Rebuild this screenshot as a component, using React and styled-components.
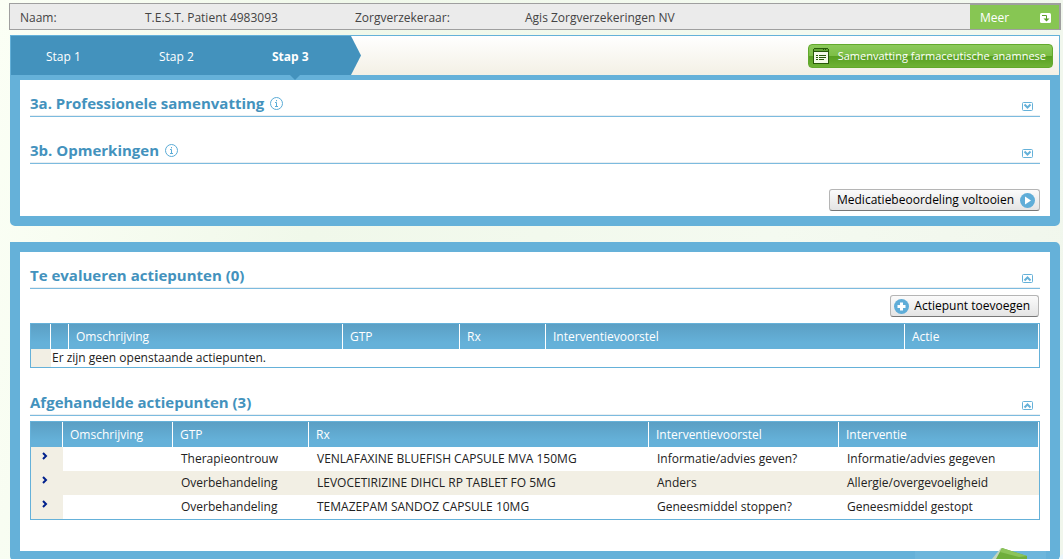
import styled, { createGlobalStyle, css } from "styled-components";

const Colors = {
  Blue: "#65b1d9",
  DarkBlue: "#4392bd",
  Line: "#7cbbdf",
  Beige: "#f2efe4",
  Green: "#87c653",
  Text: "#222222",
};

const GlobalStyle = createGlobalStyle`
  * {
    box-sizing: border-box;
  }

  body {
    margin: 0;
    min-height: 100vh;
    overflow: hidden;
    background: linear-gradient(100deg, #fbfff5 0%, #f0f8ea 30%, #f4faf0 70%, #f0f6ec 100%);
    color: ${Colors.Text};
    font-family: "Open Sans", "Noto Sans", sans-serif;
    font-size: 12px;
    line-height: 16px;
  }

  button {
    font: inherit;
    cursor: pointer;
  }
`;

const Page = styled.main`
  padding: 3px 3px 0 10px;
`;

const PatientBar = styled.header`
  display: flex;
  height: 27px;
  margin: 0 -1px 5px;
  border: 1px solid #9f9f9f;
  background: #ebebeb;
  color: #444444;
`;

const PatientInfo = styled.dl`
  display: flex;
  flex: 1;
  align-items: center;
  margin: 0;
  padding: 2px 0 0 10px;
`;

const InfoLabel = styled.dt`
  width: ${({ $width }) => $width}px;
`;

const InfoValue = styled.dd`
  width: 210px;
  margin: 0;
  white-space: nowrap;
`;

const MoreButton = styled.button`
  display: flex;
  align-items: center;
  justify-content: space-between;
  width: 90px;
  padding: 1px 8px 0 10px;
  border: 0 solid #9f9f9f;
  border-width: 1px 1px 0 0;
  background: ${Colors.Green};
  color: #ffffff;
`;

const StepBar = styled.nav`
  display: flex;
  align-items: center;
  justify-content: space-between;
  height: 40px;
  padding-right: 6px;
  border: 1px solid ${Colors.Blue};
  border-bottom: 0;
  background: linear-gradient(#ffffff, #f3f0e5);
`;

const Steps = styled.ol`
  display: flex;
  align-items: center;
  width: 350px;
  height: 100%;
  margin: 0;
  padding: 2px 10px 0 0;
  list-style: none;
  background: ${Colors.DarkBlue};
  clip-path: polygon(0 0, 340px 0, 100% 50%, 340px 100%, 0 100%);
`;

const Step = styled.li`
  width: 113px;
  padding-left: 35px;
`;

const StepLink = styled.a`
  color: #ffffff;
  font-weight: ${({ $active }) => ($active ? 700 : 400)};
  text-decoration: none;
`;

const SummaryButton = styled.button`
  display: flex;
  align-items: center;
  gap: 9px;
  height: 24px;
  padding: 0 6px 0 4px;
  border: 1px solid #62a92c;
  border-radius: 4px;
  background: linear-gradient(#8cc95a 0%, #7dbf47 48%, #58a022 52%, #6eb236 100%);
  color: #ffffff;
  font-size: 11px;
  white-space: nowrap;
`;

const Panel = styled.section`
  padding: 0 10px;
  border: 10px solid ${Colors.Blue};
  border-radius: 5px;
  background: #ffffff;
`;

const StepPanel = styled(Panel)`
  padding-bottom: 5px;
  margin-bottom: 16px;
  border-top-width: 5px;
  border-radius: 0 0 5px 5px;
`;

const ActionsPanel = styled(Panel)`
  padding-bottom: 31px;
  border-radius: 0 5px 5px 5px;
`;

const StepPointer = styled.span`
  position: absolute;
  top: 75px;
  left: 290px;
  border: 5px solid transparent;
  border-top-color: ${Colors.DarkBlue};
  border-bottom: 0;
`;

const SectionHead = styled.div`
  display: flex;
  align-items: flex-end;
  justify-content: space-between;
  height: ${({ $height }) => $height}px;
  padding: 0 7px 5px 0;
  border-bottom: 1px solid ${Colors.Line};
  box-shadow: inset 0 -1px #e9eef1;
`;

const Title = styled.h2`
  display: flex;
  align-items: center;
  gap: 6px;
  margin: 0;
  color: ${Colors.DarkBlue};
  font-size: 15px;
  font-weight: 700;
  line-height: 16px;
`;

const IconButton = styled.button`
  display: flex;
  padding: 0;
  border: 0;
  background: none;
`;

const Toolbar = styled.div`
  display: flex;
  justify-content: flex-end;
  padding: ${({ $space }) => $space};
`;

const PlainButton = styled.button`
  display: flex;
  align-items: center;
  gap: ${({ $iconFirst }) => ($iconFirst ? 5 : 6)}px;
  height: 22px;
  padding: ${({ $iconFirst }) => ($iconFirst ? "0 8px 0 3px" : "0 4px 0 7px")};
  border: 1px solid #b5b5b5;
  border-bottom-color: #777777;
  border-radius: 3px;
  background: linear-gradient(#fbfbfb, #e4e4e4);
  color: #000000;
  white-space: nowrap;
`;

const Table = styled.table`
  width: 100%;
  margin-bottom: ${({ $gap }) => $gap || 0}px;
  border: 1px solid ${Colors.Blue};
  border-collapse: separate;
  border-spacing: 0;
  table-layout: fixed;
`;

const HeadCell = styled.th`
  height: 25px;
  padding: 0 0 0 7px;
  border-right: 1px solid #ffffff;
  background: linear-gradient(#5b9fc4, #65b1d9 75%);
  color: #ffffff;
  font-weight: 400;
  text-align: left;
`;

const Cell = styled.td`
  height: 24px;
  padding: 0 0 0 8px;
  white-space: nowrap;
`;

const EmptyCell = styled.td`
  height: 18px;
  padding: 0 0 0 1px;
`;

const MarkerCell = styled.td`
  padding: 0 0 7px 11px;
  background: ${Colors.Beige};
`;

const Row = styled.tr`
  ${({ $striped }) =>
    $striped &&
    css`
      background: ${Colors.Beige};
    `}
`;

const Badge = styled.svg`
  position: fixed;
  right: 0;
  bottom: 0;
`;

const openHeads = ["", "", "Omschrijving", "GTP", "Rx", "Interventievoorstel", "Actie"];
const openWidths = [20, 18, 274, 117, 86, null, 134];

const doneHeads = ["", "Omschrijving", "GTP", "Rx", "Interventievoorstel", "Interventie"];
const doneWidths = [32, 110, 136, null, 190, 200];

const doneRows = [
  ["", "Therapieontrouw", "VENLAFAXINE BLUEFISH CAPSULE MVA 150MG", "Informatie/advies geven?", "Informatie/advies gegeven"],
  ["", "Overbehandeling", "LEVOCETIRIZINE DIHCL RP TABLET FO 5MG", "Anders", "Allergie/overgevoeligheid"],
  ["", "Overbehandeling", "TEMAZEPAM SANDOZ CAPSULE 10MG", "Geneesmiddel stoppen?", "Geneesmiddel gestopt"],
];

function InfoIcon() {
  return (
    <svg width="13" height="13" viewBox="0 0 13 13" fill="none" stroke="#5aabd6">
      <circle cx="6.5" cy="6.5" r="6" />
      <path d="M6.5 3v1.3M5 5.5h1.5v4M5 9.5h3" />
    </svg>
  );
}

function ToggleIcon({ open }) {
  return (
    <svg width="11" height="9" viewBox="0 0 11 9" fill="none" stroke="#65b1d9">
      <rect x=".5" y=".5" width="10" height="8" rx="1" />
      <path d={open ? "M2.5 6.5l3-3 3 3" : "M2.5 2.5l3 3 3-3"} strokeWidth="2" />
    </svg>
  );
}

function MoreIcon() {
  return (
    <svg width="11" height="10" viewBox="0 0 11 10">
      <rect width="11" height="10" rx="1.5" fill="#ffffff" />
      <path d="M2 2.5h4.5V6" fill="none" stroke="#5a9e28" />
      <path d="M3.5 5.5h6l-3 3z" fill="#5a9e28" />
    </svg>
  );
}

function WindowIcon() {
  return (
    <svg width="16" height="16" viewBox="0 0 16 16" shapeRendering="crispEdges">
      <path d="M1 0h14v1h1v15H0V1h1z" fill="#285a08" />
      <path d="M1 1h14v2H1z" fill="#64a637" />
      <path d="M10 1h1v1h-1zM12 1h1v1h-1z" fill="#285a08" />
      <path d="M1 4h14v11H1z" fill="#f4fbe9" />
      <path d="M3 7.5h2M3 9.5h2M3 11.5h2M6 7.5h7M6 9.5h7M6 11.5h5" stroke="#285a08" />
    </svg>
  );
}

function RoundIcon({ d, fill, stroke }) {
  return (
    <svg width="15" height="15" viewBox="0 0 15 15">
      <circle cx="7.5" cy="7.5" r="7.5" fill="#5fadd8" />
      <path d={d} fill={fill || "none"} stroke={stroke || "none"} strokeWidth="3" />
    </svg>
  );
}

function Section({ title, info, open, height }) {
  return (
    <SectionHead $height={height}>
      <Title>
        {title}
        {info && <InfoIcon />}
      </Title>
      <IconButton type="button" aria-label={title} aria-expanded={!!open}>
        <ToggleIcon open={open} />
      </IconButton>
    </SectionHead>
  );
}

function Columns({ widths }) {
  return (
    <colgroup>
      {widths.map((width, i) => (
        <col key={i} width={width || undefined} />
      ))}
    </colgroup>
  );
}

function TableHead({ heads }) {
  return (
    <thead>
      <tr>
        {heads.map((head, i) => (
          <HeadCell key={i} scope="col">
            {head}
          </HeadCell>
        ))}
      </tr>
    </thead>
  );
}

export default function App() {
  return (
    <Page>
      <GlobalStyle />

      <PatientBar>
        <PatientInfo>
          <InfoLabel $width={125}>Naam:</InfoLabel>
          <InfoValue>T.E.S.T. Patient 4983093</InfoValue>
          <InfoLabel $width={170}>Zorgverzekeraar:</InfoLabel>
          <InfoValue>Agis Zorgverzekeringen NV</InfoValue>
        </PatientInfo>
        <MoreButton type="button">
          Meer
          <MoreIcon />
        </MoreButton>
      </PatientBar>

      <StepBar>
        <Steps>
          <Step>
            <StepLink href="#stap1">Stap 1</StepLink>
          </Step>
          <Step>
            <StepLink href="#stap2">Stap 2</StepLink>
          </Step>
          <Step>
            <StepLink href="#stap3" $active>
              Stap 3
            </StepLink>
          </Step>
        </Steps>
        <SummaryButton type="button">
          <WindowIcon />
          Samenvatting farmaceutische anamnese
        </SummaryButton>
      </StepBar>

      <StepPanel>
        <StepPointer />
        <Section title="3a. Professionele samenvatting" info height={37} />
        <Section title="3b. Opmerkingen" info height={47} />
        <Toolbar $space="25px 0 0">
          <PlainButton type="button">
            Medicatiebeoordeling voltooien
            <RoundIcon d="M5 3.5v8l6-4z" fill="#ffffff" />
          </PlainButton>
        </Toolbar>
      </StepPanel>

      <ActionsPanel>
        <Section title="Te evalueren actiepunten (0)" open height={37} />
        <Toolbar $space="6px 1px 6px 0">
          <PlainButton type="button" $iconFirst>
            <RoundIcon d="M7.5 3.5v8M3.5 7.5h8" stroke="#ffffff" />
            Actiepunt toevoegen
          </PlainButton>
        </Toolbar>
        <Table>
          <Columns widths={openWidths} />
          <TableHead heads={openHeads} />
          <tbody>
            <tr>
              <MarkerCell />
              <EmptyCell colSpan={6}>Er zijn geen openstaande actiepunten.</EmptyCell>
            </tr>
          </tbody>
        </Table>

        <Section title="Afgehandelde actiepunten (3)" open height={48} />
        <Toolbar $space="5px 0 0" />
        <Table>
          <Columns widths={doneWidths} />
          <TableHead heads={doneHeads} />
          <tbody>
            {doneRows.map((row, i) => (
              <Row key={i} $striped={i % 2 === 1}>
                <MarkerCell>
                  <IconButton type="button" aria-label="Details">
                    <svg width="6" height="8" viewBox="0 0 6 8">
                      <path d="M1 1l3 3-3 3" fill="none" stroke="#00208c" strokeWidth="2" />
                    </svg>
                  </IconButton>
                </MarkerCell>
                {row.map((text, j) => (
                  <Cell key={j}>{text}</Cell>
                ))}
              </Row>
            ))}
          </tbody>
        </Table>
      </ActionsPanel>

      <Badge width="148" height="12" viewBox="0 0 148 12">
        <path d="M0 4h131v8H0z" fill="#6db6dc" />
        <path d="M77 12l9-11 3 1-7 10z" fill="#c3d6c0" />
        <path d="M81 12l6-11 25 8v3z" fill="#6fae3c" />
        <path d="M87 1l25 8-8 1-19-5z" fill="#8cc45a" />
        <path d="M144 12q1-4 4-5v5z" fill="#e8f5fa" />
      </Badge>
    </Page>
  );
}
